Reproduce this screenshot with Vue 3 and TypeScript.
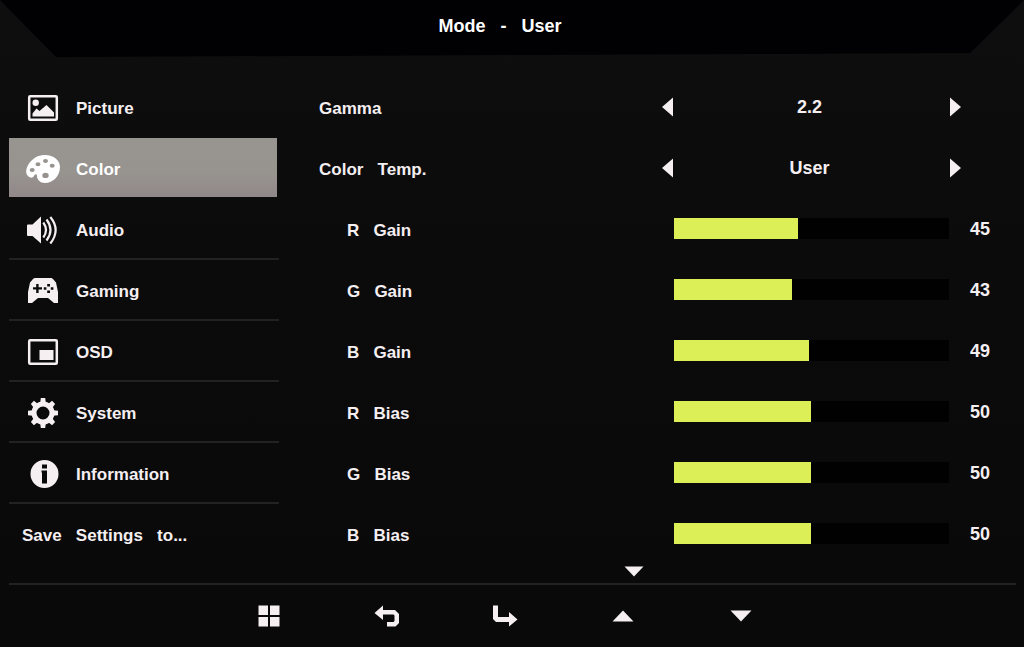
<script setup lang="ts">
import { ref } from 'vue'

interface MenuItem { id: string; label: string }
interface Choice { id: string; label: string; options: string[]; index: number }
interface Level { id: string; label: string; value: number }

const title = 'Mode   -   User'
const menu: MenuItem[] = [
  { id: 'picture', label: 'Picture' },
  { id: 'color', label: 'Color' },
  { id: 'audio', label: 'Audio' },
  { id: 'gaming', label: 'Gaming' },
  { id: 'osd', label: 'OSD' },
  { id: 'system', label: 'System' },
  { id: 'information', label: 'Information' },
  { id: 'save', label: 'Save   Settings   to...' },
]
const selected = ref('color')

const choices = ref<Choice[]>([
  { id: 'gamma', label: 'Gamma', options: ['1.8', '2.2', '2.4'], index: 1 },
  { id: 'temp', label: 'Color   Temp.', options: ['Warm', 'Normal', 'Cool', 'User'], index: 3 },
])
const levels = ref<Level[]>([
  { id: 'r-gain', label: 'R   Gain', value: 45 },
  { id: 'g-gain', label: 'G   Gain', value: 43 },
  { id: 'b-gain', label: 'B   Gain', value: 49 },
  { id: 'r-bias', label: 'R   Bias', value: 50 },
  { id: 'g-bias', label: 'G   Bias', value: 50 },
  { id: 'b-bias', label: 'B   Bias', value: 50 },
])
const teeth = [0, 45, 90, 135, 180, 225, 270, 315]

function step(choice: Choice, by: number) {
  const n = choice.options.length
  choice.index = (choice.index + by + n) % n
}
function move(by: number) {
  const at = menu.findIndex((m) => m.id === selected.value)
  selected.value = menu[(at + by + menu.length) % menu.length].id
}
</script>

<template>
  <div class="screen">
    <header class="top">
      <h1>{{ title }}</h1>
    </header>

    <main class="body">
      <nav class="menu" aria-label="Main menu">
        <button
          v-for="item in menu"
          :key="item.id"
          type="button"
          class="item"
          :class="['item-' + item.id, { selected: item.id === selected }]"
          @click="selected = item.id"
        >
          <svg v-if="item.id !== 'save'" class="icon" viewBox="0 0 36 36" aria-hidden="true">
            <g v-if="item.id === 'picture'">
              <rect x="4.2" y="6.2" width="27.6" height="23.6" rx="1" fill="none" stroke="currentColor" stroke-width="2.5" />
              <circle cx="10.7" cy="12.7" r="3.2" />
              <path d="M7.5 26.5V23.5L11.5 18.5L14.5 21L21.5 15L29 22.5V26.5Z" />
            </g>
            <path
              v-else-if="item.id === 'color'"
              fill-rule="evenodd"
              d="M19 4C28 3.5 35 9 35 16C35 25 28 32 20 32C15 32 12 28.5 12 25C12 22.5 10 23 9 25C7.5 27.5 5 27 3 25C0 22 1 17 4 12.5C8 7 13 4.3 19 4Z
                 M4.7 19a2.5 2 0 1 0 5 0a2.5 2 0 1 0-5 0Z M10.5 13.3a2.5 2 0 1 0 5 0a2.5 2 0 1 0-5 0Z
                 M18 10a2.5 2 0 1 0 5 0a2.5 2 0 1 0-5 0Z M24.7 14.7a2.5 2 0 1 0 5 0a2.5 2 0 1 0-5 0Z
                 M17.3 24.4a3.2 2.7 0 1 0 6.4 0a3.2 2.7 0 1 0-6.4 0Z"
            />
            <g v-else-if="item.id === 'audio'">
              <path d="M2 13.5Q2 12.5 3 12.5H7.5L16 4.5V31.5L7.5 24H3Q2 24 2 23Z" />
              <g fill="none" stroke="currentColor" stroke-width="2.2">
                <path d="M18.3 10.5Q23.7 18 18.3 25.5" />
                <path d="M21.5 7.5Q29.5 18 21.5 28.5" />
                <path d="M25.3 5Q36 18 25.3 31.5" />
              </g>
            </g>
            <path
              v-else-if="item.id === 'gaming'"
              fill-rule="evenodd"
              d="M9.5 5H26.5L28 6L31 9.5L33 19V30H29L23 25H13L7 30H3V19L5 9.5L8 6Z
                 M11.2 11V14.2H8V16.6H11.2V20H13.6V16.6H17V14.2H13.6V11Z
                 M22.2 11H25V13.6H22.2Z M22.2 17.4H25V20H22.2Z M18.8 14.2H21.4V16.8H18.8Z M25.8 14.2H28.4V16.8H25.8Z"
            />
            <g v-else-if="item.id === 'osd'">
              <rect x="4.2" y="6.2" width="27.6" height="23.6" rx="1" fill="none" stroke="currentColor" stroke-width="2.5" />
              <rect x="14.5" y="16" width="14" height="10" />
            </g>
            <g v-else-if="item.id === 'system'">
              <circle cx="18" cy="18" r="9" fill="none" stroke="currentColor" stroke-width="5" />
              <path v-for="a in teeth" :key="a" d="M15.2 8L15.8 3H20.2L20.8 8Z" :transform="`rotate(${a} 18 18)`" />
            </g>
            <path
              v-else
              fill-rule="evenodd"
              d="M5.5 18a14 14 0 1 0 28 0a14 14 0 1 0-28 0Z M17 8.5H22V12.5H17Z M16.5 14.5H22V27.5H17V16.5H16.5Z"
            />
          </svg>
          <span>{{ item.label }}</span>
        </button>
      </nav>

      <section class="settings" aria-label="Color settings">
        <div v-for="c in choices" :key="c.id" class="row">
          <span :id="c.id" class="name">{{ c.label }}</span>
          <div class="stepper" role="group" :aria-labelledby="c.id">
            <button type="button" aria-label="Previous" @click="step(c, -1)">
              <svg width="11" height="20" viewBox="0 0 11 20"><path d="M11 0.5V19.5L0 10Z" /></svg>
            </button>
            <output>{{ c.options[c.index] }}</output>
            <button type="button" aria-label="Next" @click="step(c, 1)">
              <svg width="11" height="20" viewBox="0 0 11 20"><path d="M0 0.5V19.5L11 10Z" /></svg>
            </button>
          </div>
        </div>
        <div v-for="l in levels" :key="l.id" class="row">
          <label :for="l.id" class="name sub">{{ l.label }}</label>
          <input
            :id="l.id"
            v-model.number="l.value"
            type="range"
            min="0"
            max="100"
            :style="{ '--level': l.value + '%' }"
          />
          <output :for="l.id" class="value">{{ l.value }}</output>
        </div>
      </section>
    </main>

    <div class="more">
      <svg width="20" height="11" viewBox="0 0 20 11" aria-hidden="true"><path d="M0.5 0.5H19.5L10 10.5Z" /></svg>
    </div>

    <footer class="keys">
      <button type="button" aria-label="Menu">
        <svg width="22" height="22" viewBox="0 0 22 22"><path d="M0.5 0.5H10V10H0.5Z M12 0.5H21.5V10H12Z M0.5 12H10V21.5H0.5Z M12 12H21.5V21.5H12Z" /></svg>
      </button>
      <button type="button" aria-label="Back">
        <svg width="26" height="22" viewBox="0 0 26 22"><path d="M0.5 8L9 0.5V5H21L25 9V18L21.5 21.5H13V17H19.5L20.5 16V10.5L19.5 9.5H9V15Z" /></svg>
      </button>
      <button type="button" aria-label="Enter">
        <svg width="26" height="22" viewBox="0 0 26 22"><path d="M1 0.5H6V12H17V7L25.5 14.5L17 21.5V17H4L1 14Z" /></svg>
      </button>
      <button type="button" aria-label="Up" @click="move(-1)">
        <svg width="22" height="12" viewBox="0 0 22 12"><path d="M0.5 11.5L11 0.5L21.5 11.5Z" /></svg>
      </button>
      <button type="button" aria-label="Down" @click="move(1)">
        <svg width="22" height="12" viewBox="0 0 22 12"><path d="M0.5 0.5H21.5L11 11.5Z" /></svg>
      </button>
    </footer>
  </div>
</template>

<style>
body {
  margin: 0;
  background: #0b0b0c;
}
</style>

<style scoped>
.screen {
  box-sizing: border-box;
  min-height: 100vh;
  display: flex;
  flex-direction: column;
  background: linear-gradient(#0e0e0e, #0b0b0c 40%, #090909);
  color: #f5eff2;
  font: bold 17px/20px "Liberation Sans", Arial, sans-serif;
  white-space: pre;
}
button {
  margin: 0;
  padding: 0;
  border: 0;
  background: none;
  color: inherit;
  font: inherit;
  white-space: inherit;
  cursor: pointer;
}
svg {
  display: block;
  fill: currentColor;
}
.top {
  box-sizing: border-box;
  height: 57px;
  padding: 16px 24px 0 0;
  background: #010103;
  clip-path: polygon(0 0, 100% 0, calc(100% - 54px) 53px, 56px 100%);
  text-align: center;
}
h1 {
  margin: 0;
  font: inherit;
  font-size: 18px;
  color: #fff;
}
.body {
  display: flex;
  padding: 18px 0 0 9px;
}
.menu {
  display: flex;
  flex-direction: column;
  flex: none;
  width: 270px;
}
.item {
  box-sizing: border-box;
  display: flex;
  align-items: center;
  gap: 15px;
  height: 61px;
  padding: 2px 0 0 16px;
  border-top: 2px solid #222222;
  text-align: left;
}
.item span {
  padding-top: 2px;
}
.item-picture,
.item-color,
.item-audio {
  border-top-color: transparent;
}
.item-save {
  padding-left: 13px;
}
.item.selected {
  margin-right: 2px;
  background: linear-gradient(#989590, #97938f 60%, #918889) padding-box;
  color: #fff;
}
.icon {
  flex: none;
  width: 36px;
  height: 36px;
}
.settings {
  flex: 1;
  min-width: 0;
  padding-top: 1px;
}
.row {
  display: grid;
  grid-template-columns: 383fr 299fr 63px;
  align-items: center;
  height: 61px;
}
.name {
  padding: 4px 0 0 40px;
}
.name.sub {
  padding-left: 68px;
}
.stepper {
  display: flex;
  align-items: center;
  justify-content: space-between;
}
.stepper output {
  padding-right: 4px;
}
output {
  font-size: 18px;
}
.value {
  padding-left: 9px;
}
input[type="range"] {
  appearance: none;
  box-sizing: border-box;
  width: auto;
  min-width: 0;
  height: 21px;
  margin: 0 12px;
  background: linear-gradient(90deg, #dcef56 var(--level), #010101 var(--level));
  cursor: pointer;
}
input[type="range"]::-webkit-slider-thumb {
  appearance: none;
  width: 4px;
  height: 21px;
  background: transparent;
}
.more {
  display: flex;
  justify-content: center;
  height: 17px;
  padding: 2px 76px 0 319px;
}
.keys {
  display: flex;
  flex: 1;
  justify-content: center;
  min-height: 62px;
  margin: 0 8px 0 9px;
  padding-right: 16px;
  border-top: 2px solid #222222;
}
.keys button {
  display: flex;
  align-items: center;
  justify-content: center;
  flex: 0 1 118px;
}
</style>
